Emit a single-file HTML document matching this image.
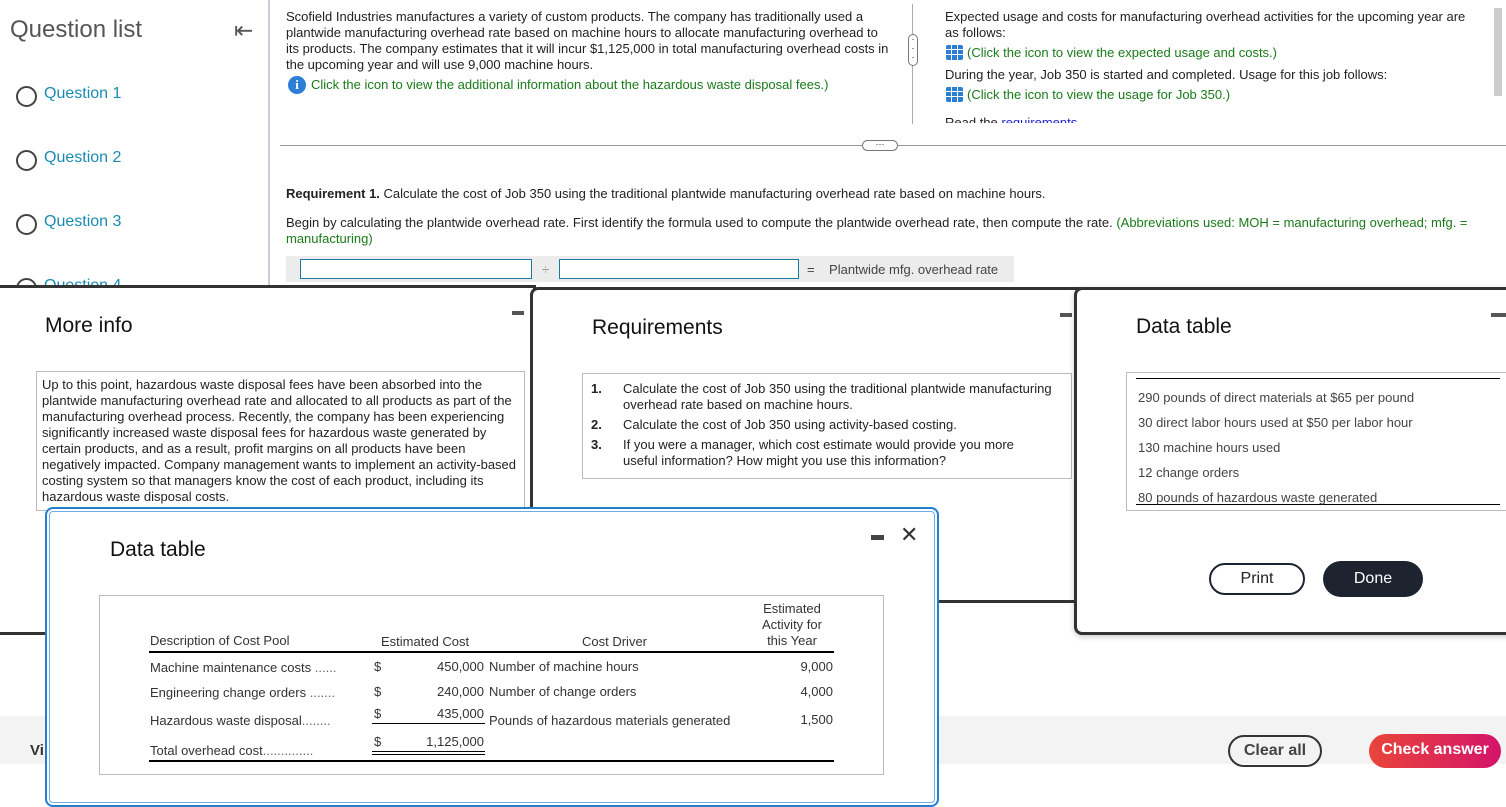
<!DOCTYPE html>
<html><head><meta charset="utf-8"><style>
*{margin:0;padding:0;box-sizing:border-box}
body{width:1506px;height:764px;overflow:hidden;position:relative;background:#fff;font-family:"Liberation Sans",Arial,sans-serif;color:#222;font-size:13px}
.a{position:absolute;white-space:nowrap}
.g{color:#1a7a1a}
.q{position:absolute;left:16px;font-size:16px;color:#1a8ab0}
.q:before{content:"";position:absolute;left:0;top:1px;width:17px;height:17px;border:2px solid #444;border-radius:50%}
.q span{margin-left:28px}
.gi{display:inline-block;width:17px;height:15px;background:#2d7fd6;border-radius:2px;vertical-align:-3px;margin-right:4px;background-image:linear-gradient(90deg,transparent 5px,#fff 5px,#fff 6px,transparent 6px,transparent 11px,#fff 11px,#fff 12px,transparent 12px),linear-gradient(transparent 4px,#fff 4px,#fff 5px,transparent 5px,transparent 9px,#fff 9px,#fff 10px,transparent 10px)}
.panel{position:absolute;background:#fff;border:3px solid #333;border-radius:8px}
.h{position:absolute;font-size:21px;color:#111}
.t{font-size:13px;color:#333}
</style></head><body>
<div class="a" style="left:10px;top:16px;font-size:24px;color:#555">Question list</div>
<div class="a" style="left:234px;top:17px;font-size:23px;color:#555">⇤</div>
<div class="q" style="top:85px"><span>Question 1</span></div>
<div class="q" style="top:149px"><span>Question 2</span></div>
<div class="q" style="top:213px"><span>Question 3</span></div>
<div class="q" style="top:277px"><span>Question 4</span></div>
<div class="a" style="left:268px;top:0;width:2px;height:290px;background:#ccd"></div>
<div class="a" style="left:286px;top:9px;line-height:16px">Scofield Industries manufactures a variety of custom products. The company has traditionally used a<br>plantwide manufacturing overhead rate based on machine hours to allocate manufacturing overhead to<br>its products. The company estimates that it will incur $1,125,000 in total manufacturing overhead costs in<br>the upcoming year and will use 9,000 machine hours.</div>
<div class="a g" style="left:288px;top:76px"><span style="display:inline-block;width:18px;height:18px;border-radius:50%;background:#2d7fd6;color:#fff;font-weight:bold;text-align:center;line-height:18px;font-family:'Liberation Serif',serif;margin-right:5px">i</span>Click the icon to view the additional information about the hazardous waste disposal fees.)</div>
<div class="a" style="left:912px;top:4px;width:1px;height:120px;background:#aab"></div>
<div class="a" style="left:908px;top:34px;width:10px;height:32px;border:1px solid #777;border-radius:5px;background:#fff;font-size:9px;text-align:center;line-height:9px">·<br>·<br>·</div>
<div class="a" style="left:945px;top:9px;line-height:16px">Expected usage and costs for manufacturing overhead activities for the upcoming year are<br>as follows:</div>
<div class="a g" style="left:946px;top:45px"><span class="gi"></span>(Click the icon to view the expected usage and costs.)</div>
<div class="a" style="left:945px;top:67px">During the year, Job 350 is started and completed. Usage for this job follows:</div>
<div class="a g" style="left:946px;top:87px"><span class="gi"></span>(Click the icon to view the usage for Job 350.)</div>
<div class="a" style="left:945px;top:116px;height:7px;overflow:hidden;line-height:14px">Read the <span style="color:#22c">requirements</span>.</div>
<div class="a" style="left:1494px;top:8px;width:8px;height:88px;background:#ccc"></div>
<div class="a" style="left:280px;top:145px;width:1226px;height:1px;background:#999"></div>
<div class="a" style="left:862px;top:140px;width:36px;height:11px;border:1px solid #777;border-radius:6px;background:#fff;font-size:9px;line-height:6px;text-align:center">···</div>
<div class="a" style="left:286px;top:186px"><b>Requirement 1.</b> Calculate the cost of Job 350 using the traditional plantwide manufacturing overhead rate based on machine hours.</div>
<div class="a" style="left:286px;top:215px;line-height:16px">Begin by calculating the plantwide overhead rate. First identify the formula used to compute the plantwide overhead rate, then compute the rate. <span class="g">(Abbreviations used: MOH = manufacturing overhead; mfg. =</span><br><span class="g">manufacturing)</span></div>
<div class="a" style="left:286px;top:256px;width:728px;height:26px;background:#ececec"></div>
<div class="a" style="left:300px;top:259px;width:232px;height:20px;border:1px solid #1a7aa0;background:#fff"></div>
<div class="a" style="left:542px;top:262px;color:#888">÷</div>
<div class="a" style="left:559px;top:259px;width:240px;height:20px;border:1px solid #1a7aa0;background:#fff"></div>
<div class="a" style="left:807px;top:262px;color:#444">=&nbsp;&nbsp;&nbsp; Plantwide mfg. overhead rate</div>
<div class="a" style="left:0;top:716px;width:1506px;height:48px;background:#f3f3f3"></div>
<div class="a" style="left:30px;top:742px;font-size:15px;font-weight:bold;color:#333">Vi</div>
<div class="a" style="left:1228px;top:735px;width:94px;height:32px;border:2px solid #333;border-radius:16px;text-align:center;line-height:28px;font-size:16px;font-weight:bold;color:#444">Clear all</div>
<div class="a" style="left:1369px;top:734px;width:132px;height:34px;border-radius:17px;background:linear-gradient(90deg,#e8453a,#d4146a);text-align:center;line-height:32px;font-size:16px;font-weight:bold;color:#fff">Check answer</div>
<div class="a" style="left:-4px;top:285px;width:540px;height:350px;background:#fff;border:3px solid #333"></div>
<div class="a" style="left:512px;top:311px;width:12px;height:4px;background:#555"></div>
<div class="h" style="left:45px;top:314px">More info</div>
<div class="a" style="left:36px;top:371px;width:489px;height:140px;border:1px solid #bbb;padding:5px 5px;line-height:16px;color:#222">Up to this point, hazardous waste disposal fees have been absorbed into the<br>plantwide manufacturing overhead rate and allocated to all products as part of the<br>manufacturing overhead process. Recently, the company has been experiencing<br>significantly increased waste disposal fees for hazardous waste generated by<br>certain products, and as a result, profit margins on all products have been<br>negatively impacted. Company management wants to implement an activity-based<br>costing system so that managers know the cost of each product, including its<br>hazardous waste disposal costs.</div>
<div class="panel" style="left:530px;top:287px;width:560px;height:316px"></div>
<div class="a" style="left:1060px;top:313px;width:12px;height:4px;background:#555"></div>
<div class="h" style="left:592px;top:316px">Requirements</div>
<div class="a" style="left:582px;top:373px;width:490px;height:106px;border:1px solid #bbb"></div>
<div class="a" style="left:591px;top:381px;font-weight:bold">1.</div>
<div class="a" style="left:623px;top:381px;line-height:16px">Calculate the cost of Job 350 using the traditional plantwide manufacturing<br>overhead rate based on machine hours.</div>
<div class="a" style="left:591px;top:417px;font-weight:bold">2.</div>
<div class="a" style="left:623px;top:417px">Calculate the cost of Job 350 using activity-based costing.</div>
<div class="a" style="left:591px;top:437px;font-weight:bold">3.</div>
<div class="a" style="left:623px;top:437px;line-height:16px">If you were a manager, which cost estimate would provide you more<br>useful information? How might you use this information?</div>
<div class="panel" style="left:1074px;top:287px;width:450px;height:348px;box-shadow:0 2px 6px rgba(0,0,0,.2)"></div>
<div class="a" style="left:1491px;top:313px;width:15px;height:4px;background:#555"></div>
<div class="h" style="left:1136px;top:315px">Data table</div>
<div class="a" style="left:1126px;top:372px;width:390px;height:139px;border:1px solid #bbb"></div>
<div class="a" style="left:1136px;top:378px;width:364px;height:1px;background:#000"></div>
<div class="a" style="left:1136px;top:504px;width:364px;height:1px;background:#000"></div>
<div class="a" style="left:1138px;top:385px;color:#444;line-height:25px">290 pounds of direct materials at $65 per pound<br>30 direct labor hours used at $50 per labor hour<br>130 machine hours used<br>12 change orders<br>80 pounds of hazardous waste generated</div>
<div class="a" style="left:1209px;top:563px;width:96px;height:32px;border:2px solid #1e2330;border-radius:16px;text-align:center;line-height:28px;font-size:16px;color:#222">Print</div>
<div class="a" style="left:1323px;top:561px;width:100px;height:36px;border-radius:18px;background:#1e2330;text-align:center;line-height:36px;font-size:16px;color:#fff">Done</div>
<div class="a" style="left:45px;top:507px;width:894px;height:300px;background:#fff;border:2px solid #1f7fd0;border-radius:8px;box-shadow:inset 0 0 0 2px #fff,inset 0 0 0 3px #6aaee8"></div>
<div class="a" style="left:871px;top:535px;width:13px;height:5px;background:#444"></div>
<div class="a" style="left:900px;top:522px;font-size:22px;color:#333">✕</div>
<div class="h" style="left:110px;top:538px">Data table</div>
<div class="a" style="left:99px;top:595px;width:785px;height:180px;border:1px solid #bbb"></div>
<div class="a t" style="left:150px;top:633px">Description of Cost Pool</div>
<div class="a t" style="left:381px;top:634px">Estimated Cost</div>
<div class="a t" style="left:582px;top:634px">Cost Driver</div>
<div class="a t" style="left:742px;top:601px;width:100px;text-align:center;line-height:16px">Estimated<br>Activity for<br>this Year</div>
<div class="a" style="left:149px;top:651px;width:685px;height:2px;background:#000"></div>
<div class="a" style="left:149px;top:760px;width:685px;height:2px;background:#000"></div>
<div class="a t" style="left:150px;top:660px">Machine maintenance costs <span style="color:#666">......</span></div>
<div class="a t" style="left:374px;top:659px">$</div>
<div class="a t" style="left:150px;top:685px">Engineering change orders <span style="color:#666">.......</span></div>
<div class="a t" style="left:374px;top:684px">$</div>
<div class="a t" style="left:150px;top:713px">Hazardous waste disposal<span style="color:#666">........</span></div>
<div class="a t" style="left:374px;top:706px">$</div>
<div class="a t" style="left:150px;top:743px">Total overhead cost<span style="color:#666">..............</span></div>
<div class="a t" style="left:374px;top:734px">$</div>
<div class="a t" style="left:400px;top:659px;width:84px;text-align:right">450,000</div>
<div class="a t" style="left:400px;top:684px;width:84px;text-align:right">240,000</div>
<div class="a t" style="left:400px;top:706px;width:84px;text-align:right">435,000</div>
<div class="a t" style="left:400px;top:734px;width:84px;text-align:right">1,125,000</div>
<div class="a" style="left:372px;top:723px;width:113px;height:1px;background:#000"></div>
<div class="a" style="left:372px;top:751px;width:113px;height:4px;border-top:1px solid #000;border-bottom:1px solid #000"></div>
<div class="a t" style="left:489px;top:659px">Number of machine hours</div>
<div class="a t" style="left:489px;top:684px">Number of change orders</div>
<div class="a t" style="left:489px;top:713px">Pounds of hazardous materials generated</div>
<div class="a t" style="left:760px;top:659px;width:73px;text-align:right">9,000</div>
<div class="a t" style="left:760px;top:684px;width:73px;text-align:right">4,000</div>
<div class="a t" style="left:760px;top:712px;width:73px;text-align:right">1,500</div>
</body></html>
